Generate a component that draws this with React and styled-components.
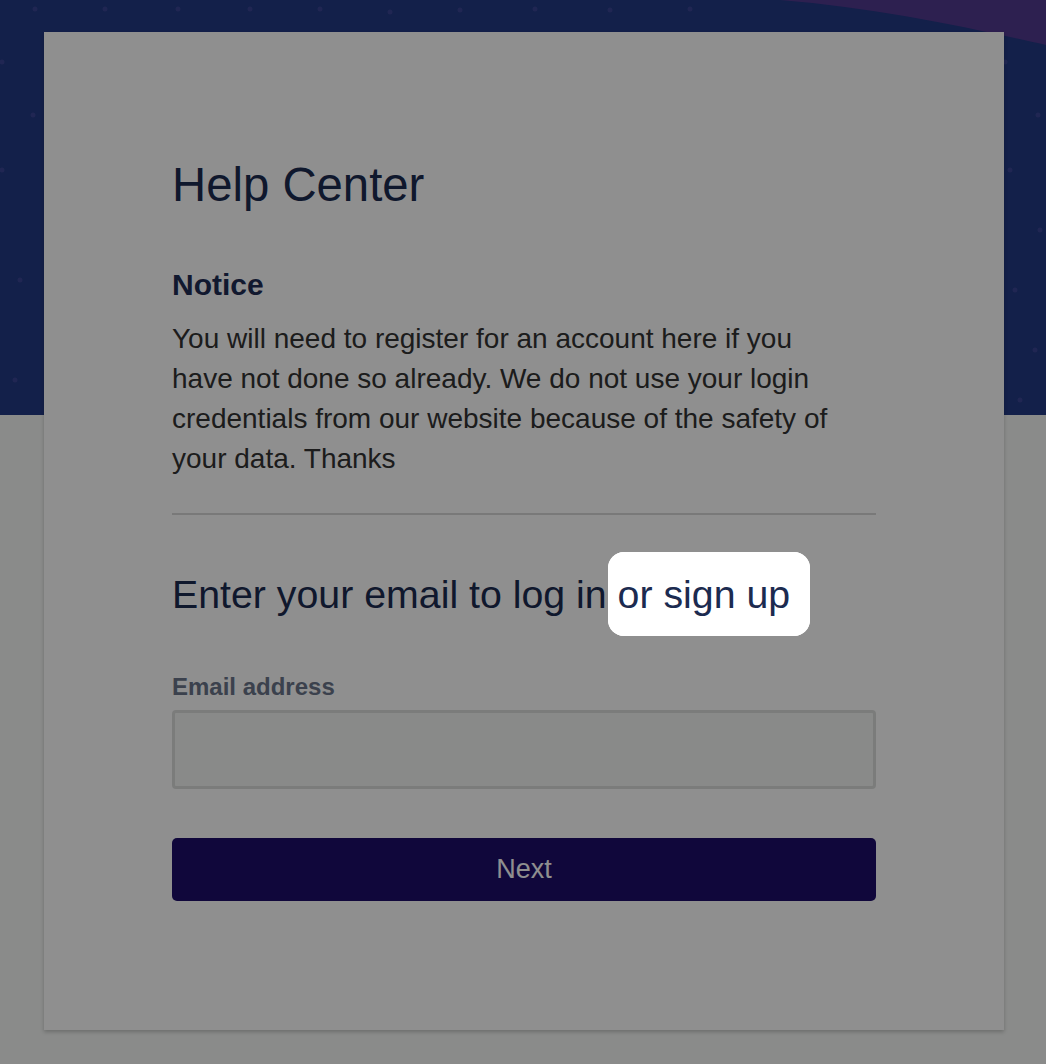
import React from 'react'
import styled, { createGlobalStyle } from 'styled-components'

const GlobalStyle = createGlobalStyle`
    html, body {
        margin: 0;
        padding: 0;
        background: #f6f8f6;
        font-family: "Liberation Sans", Arial, Helvetica, sans-serif;
    }
`

const Page = styled.div`
    min-height: 1064px;
    overflow: hidden;
`

//Hero band behind the card
const Hero = styled.div`
    height: 415px;
    background: #223984;
    position: relative;
    overflow: hidden;
`
const Decor = styled.svg`
    position: absolute;
    inset: 0;
    width: 100%;
    height: 100%;
`

const Card = styled.div`
    width: 960px;
    margin: -383px 0 0 44px;
    padding: 126px 128px 129px;
    box-sizing: border-box;
    background: #ffffff;
    box-shadow: 0 2px 4px rgba(0, 0, 0, 0.22);
    position: relative;
`

const Title = styled.h1`
    margin: 0;
    font-size: 47.3px;
    line-height: 54px;
    font-weight: 400;
    color: #1c2b50;
`
const NoticeTitle = styled.h3`
    margin: 55px 0 0;
    font-size: 30px;
    line-height: 36px;
    font-weight: 700;
    color: #1f2d55;
`
const NoticeText = styled.p`
    margin: 16px 0 0;
    max-width: 672px;
    font-size: 28px;
    line-height: 40px;
    color: #333333;
`
const Divider = styled.hr`
    margin: 34px 0 0;
    border: 0;
    border-top: 2px solid #d8d8d8;
`
const FormTitle = styled.h2`
    margin: 55px 0 0;
    font-size: 39.3px;
    line-height: 48px;
    font-weight: 400;
    color: #1c2b50;
`
// tour spotlight: the dim layer is the shadow of the highlighted word
const Spotlight = styled.span`
    position: relative;
    z-index: 10;
    background: #ffffff;
    padding: 20px 20px 20px 10px;
    margin-left: -10px;
    border-radius: 16px;
    box-shadow: 0 0 0 4000px rgba(0, 0, 0, 0.44);
`
const Label = styled.label`
    display: block;
    margin-top: 54px;
    font-size: 24px;
    line-height: 30px;
    font-weight: 700;
    color: #697489;
`
const Input = styled.input`
    display: block;
    width: 100%;
    height: 79px;
    margin-top: 8px;
    box-sizing: border-box;
    border: 3px solid #dcdedc;
    border-radius: 4px;
    background: #f5f7f5;
    font-size: 26px;
    padding: 0 16px;
    font-family: inherit;
    outline: none;
`
const Button = styled.button`
    display: block;
    width: 100%;
    height: 63px;
    margin-top: 49px;
    border: 0;
    border-radius: 5px;
    background: #1d0e6a;
    color: #ffffff;
    font-family: inherit;
    font-size: 27px;
`

const dots = [
    [35, 9], [105, 9], [178, 9], [250, 9], [320, 9], [390, 12], [460, 10], [535, 9], [610, 10], [690, 9],
    [2, 62], [33, 115], [2, 170], [60, 230], [20, 280], [80, 330], [15, 380], [1005, 62], [1038, 115],
    [1010, 170], [1040, 230], [1015, 290], [1035, 350], [1020, 400]
]

const App = () => {
  return (
    <Page>
        <GlobalStyle />
        <Hero>
            <Decor viewBox="0 0 1046 415" preserveAspectRatio="none">
                <path d="M 780 0 C 880 8, 980 30, 1046 45 L 1046 0 Z" fill="#51398f" />
                {dots.map(([x, y], i) => (
                    <circle key={i} cx={x} cy={y} r="2.5" fill="#4a4f9e" opacity="0.6" />
                ))}
            </Decor>
        </Hero>

        <Card>
            <Title>Help Center</Title>
            <NoticeTitle>Notice</NoticeTitle>
            <NoticeText>
                You will need to register for an account here if you have not done so
                already. We do not use your login credentials from our website because
                of the safety of your data. Thanks
            </NoticeText>
            <Divider />
            <FormTitle>
                Enter your email to log in <Spotlight>or sign up</Spotlight>
            </FormTitle>
            <Label htmlFor="email">Email address</Label>
            <Input id="email" type="email" />
            <Button>Next</Button>
        </Card>
    </Page>
  )
}

export default App
